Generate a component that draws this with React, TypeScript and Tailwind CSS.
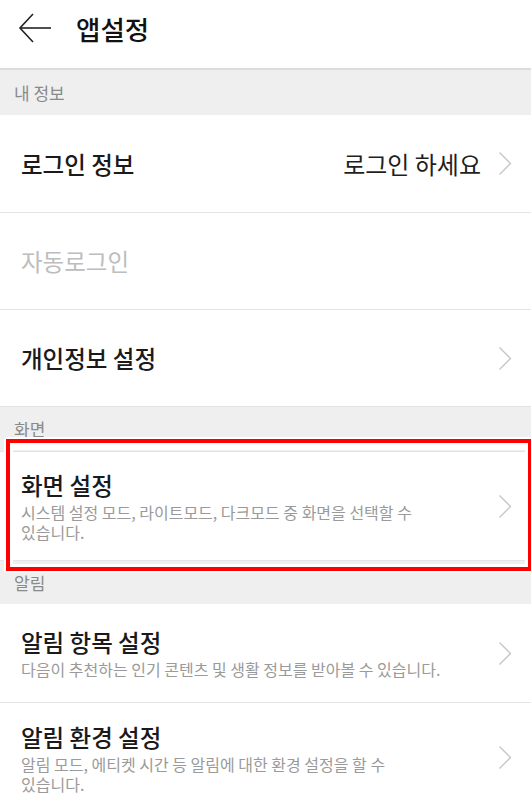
const font = { fontFamily: '"Noto Sans CJK KR", "Noto Sans", sans-serif' };

function Chevron() {
  return (
    <svg width="14" height="25" viewBox="0 0 14 25" fill="none" className="shrink-0">
      <polyline points="1.5,1.5 12.5,12.5 1.5,23.5" stroke="#c4c4c4" strokeWidth="1.3" />
    </svg>
  );
}

function SectionLabel({ label, h }: { label: string; h: string }) {
  return (
    <div className={`${h} bg-[#efefef] flex items-center pl-[14px] text-[17px] text-[#8a8a8a]`}>
      {label}
    </div>
  );
}

function Row({
  title,
  sub,
  right,
  chevron = true,
  disabled = false,
  className = "",
}: {
  title: string;
  sub?: string;
  right?: string;
  chevron?: boolean;
  disabled?: boolean;
  className?: string;
}) {
  return (
    <div className={`bg-white flex items-center pl-[21px] pr-[19px] border-[#e4e4e4] ${className}`}>
      <div className="flex-1 min-w-0">
        <div className={`text-[23.5px] leading-[30px] font-medium ${disabled ? "text-[#bdbdbd] font-normal" : "text-[#1a1a1a]"}`}>
          {title}
        </div>
        {sub && (
          <div className="mt-[2px] max-w-[426px] break-keep text-[16px] leading-[20px] text-[#9a9a9a]">{sub}</div>
        )}
      </div>
      {right && <div className="text-[24px] text-[#1f1f1f] mr-[17px]">{right}</div>}
      {chevron && <Chevron />}
    </div>
  );
}

export default function App() {
  return (
    <div className="relative w-[531px] h-[800px] overflow-hidden bg-white" style={font}>
      {/* header */}
      <div className="h-[70px] flex items-center border-b-2 border-[#dcdcdc]">
        <svg width="34" height="32" viewBox="0 0 34 32" fill="none" className="ml-[18px] -mt-[12px]">
          <line x1="2" y1="16" x2="33" y2="16" stroke="#222" strokeWidth="1.6" />
          <polyline points="15,2 2,16 15,30" stroke="#222" strokeWidth="1.6" />
        </svg>
        <div className="ml-[24px] -mt-[10px] text-[26.5px] font-medium text-[#111]">앱설정</div>
      </div>

      <SectionLabel label="내 정보" h="h-[45px]" />
      <Row title="로그인 정보" right="로그인 하세요" className="h-[98px] border-b" />
      <Row title="자동로그인" chevron={false} disabled className="h-[97px] border-b" />
      <Row title="개인정보 설정" className="h-[97px] border-b" />

      <SectionLabel label="화면" h="h-[44px]" />
      <Row
        title="화면 설정"
        sub="시스템 설정 모드, 라이트모드, 다크모드 중 화면을 선택할 수 있습니다."
        className="h-[110px] border-y"
      />

      <SectionLabel label="알림" h="h-[43px]" />
      <Row
        title="알림 항목 설정"
        sub="다음이 추천하는 인기 콘텐츠 및 생활 정보를 받아볼 수 있습니다."
        className="h-[99px] border-b"
      />
      <Row
        title="알림 환경 설정"
        sub="알림 모드, 에티켓 시간 등 알림에 대한 환경 설정을 할 수 있습니다."
        className="h-[110px] border-b"
      />

      {/* highlight annotation */}
      <div className="absolute left-[4px] top-[437px] w-[530px] h-[136px] border-2 border-white rounded-[4px] pointer-events-none">
        <div className="w-full h-full border-4 border-[#ff0000]">
          <div className="w-full h-full border-white border-t-[7px] border-x-[3px] border-b-[3px]" />
        </div>
      </div>
    </div>
  );
}
